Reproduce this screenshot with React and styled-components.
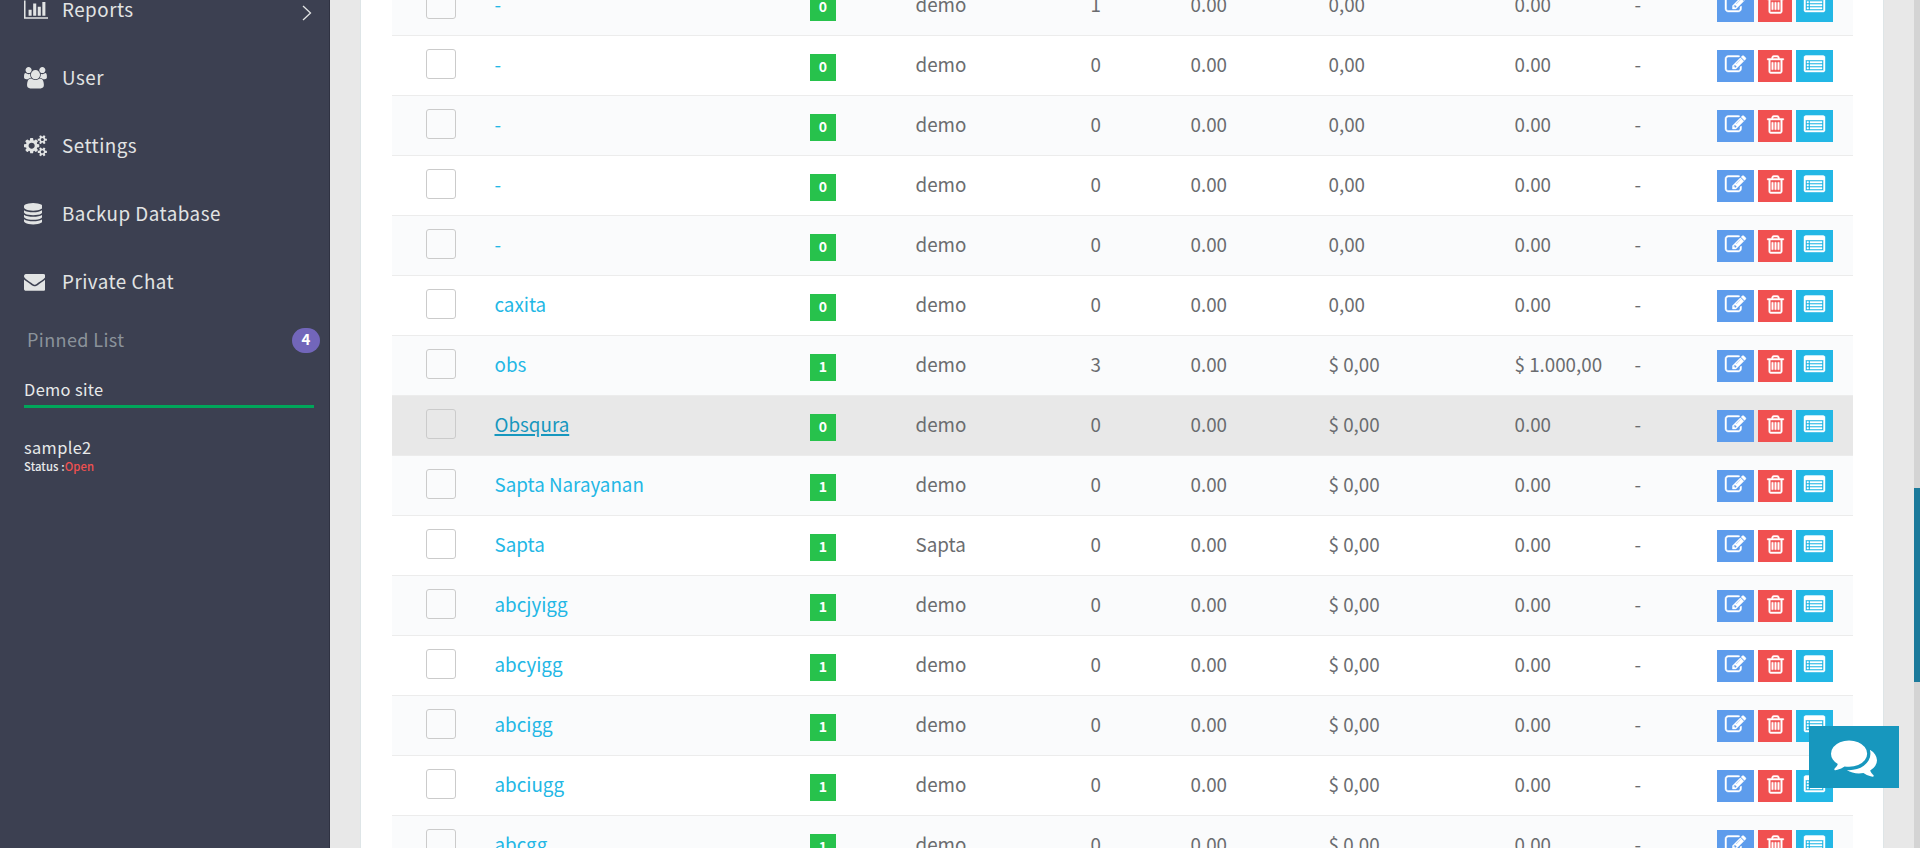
import React from "react";
import styled, { createGlobalStyle } from "styled-components";

const Global = createGlobalStyle`
  * { box-sizing: border-box; }
  html, body { margin: 0; padding: 0; }
  body {
    height: 848px;
    overflow: hidden;
    background: #e8e8e8;
    font-family: "Noto Sans CJK SC", "Open Sans", sans-serif;
    font-size: 18.8px;
    color: #6a6c6f;
  }
`;

const Page = styled.div`
  display: flex;
  height: 848px;
  overflow: hidden;
`;

const Sidebar = styled.aside`
  width: 330px;
  flex: none;
  background: #3c4051;
  border-right: 1px solid #2f3242;
  color: #e2e4e4;
  overflow: hidden;
`;

const Menu = styled.nav`
  display: flex;
  flex-direction: column;
  margin-top: -24px;
`;

const MenuItem = styled.a`
  display: grid;
  grid-template-columns: 38px 1fr auto;
  align-items: center;
  height: 68px;
  padding: 0 17px 0 24px;
  font-size: 18.8px;
  letter-spacing: 0.5px;
  line-height: 28px;
`;

const MenuLabel = styled.span`
  padding-bottom: 2px;
`;

const MenuIcon = styled.svg`
  display: block;
  height: 21.4px;
  width: ${(p) => p.$w}px;
  fill: currentColor;
`;

const Chevron = styled.svg`
  display: block;
  width: 10px;
  height: 16px;
  margin-top: 5px;
  fill: none;
  stroke: #e2e4e4;
  stroke-width: 1.3;
`;

const PinnedHeader = styled.div`
  display: flex;
  align-items: flex-start;
  justify-content: space-between;
  height: 26px;
  margin: 12px 9px 0 27px;
  color: #8b939b;
  font-size: 18px;
  line-height: 22px;
  letter-spacing: 0.4px;
`;

const Count = styled.span`
  width: 28px;
  height: 25px;
  border-radius: 13px;
  background: #7266ba;
  color: #fff;
  font-size: 15px;
  font-weight: 700;
  letter-spacing: 0;
  line-height: 22px;
  text-align: center;
`;

const Pinned = styled.div`
  margin: ${(p) => p.$top}px 15px 0 24px;
  color: #e8eaea;
  font-size: 16.4px;
  line-height: 24px;
  letter-spacing: 0.35px;
`;

const Progress = styled.div`
  height: 3px;
  margin-top: 4px;
  background: #00a65a;
`;

const Status = styled.div`
  font-size: 11.3px;
  font-weight: 500;
  line-height: 14px;
  letter-spacing: 0.1px;
  color: #e8eaea;
`;

const Open = styled.span`
  color: #f05050;
`;

const Main = styled.main`
  flex: 1;
  display: flex;
  padding-left: 30px;
  overflow: hidden;
`;

const Panel = styled.section`
  width: 1524px;
  flex: none;
  padding-left: 31px;
  background: #fff;
  border-left: 1px solid #dee5e7;
  border-right: 1px solid #dee5e7;
`;

const Table = styled.div`
  width: 1461px;
  margin-top: -25px;
`;

const Row = styled.div`
  display: grid;
  grid-template-columns: 34px 68px 316px 105px 175px 100px 138px 186px 120px 83px 1fr;
  align-items: start;
  height: 60px;
  border-top: 1px solid #ececec;
  background: ${(p) => (p.$hover ? "#e8e8e8" : p.$odd ? "#fafbfc" : "#fff")};
`;

const Check = styled.span`
  grid-column: 2;
  width: 30px;
  height: 30px;
  margin-top: 13px;
  border: 1px solid #cbcbcb;
  border-radius: 3px;
`;

const Cell = styled.span`
  padding-top: 14px;
  padding-left: 0.5px;
  line-height: 28px;
  white-space: nowrap;
`;

const Name = styled(Cell)`
  color: ${(p) => (p.$hover ? "#1797be" : "#23b7e5")};
  text-decoration: ${(p) => (p.$hover ? "underline" : "none")};
  text-decoration-thickness: 2px;
  text-underline-offset: 2px;
`;

const Badge = styled.span`
  width: 26px;
  height: 27px;
  margin-top: 18px;
  background: #27c24c;
  color: #fff;
  font-size: 14px;
  font-weight: 700;
  line-height: 25px;
  text-align: center;
`;

const Actions = styled.span`
  display: flex;
  gap: 4px;
  padding-top: 14px;
`;

const Button = styled.button`
  display: flex;
  justify-content: center;
  width: ${(p) => p.$w}px;
  height: 32px;
  padding: 4px 0 0;
  border: 0;
  background: ${(p) => p.$bg};
`;

const ButtonIcon = styled.svg`
  width: 21px;
  height: 21px;
  flex: none;
  fill: #fff;
  stroke: #fff;
  stroke-width: 36;
`;

const Scrollbar = styled.div`
  width: 6px;
  height: 848px;
  margin-left: auto;
  padding-top: 488px;
  background: #d4d4d4;
`;

const Thumb = styled.div`
  height: 194px;
  background: #1b7a9b;
`;

const Chat = styled.button`
  position: fixed;
  left: 1809px;
  top: 726px;
  display: flex;
  justify-content: center;
  width: 90px;
  height: 62px;
  padding: 8px 0 0 0;
  border: 0;
  background: #1797be;
`;

const ChatIcon = styled.svg`
  width: 46px;
  height: 46px;
  flex: none;
  fill: #fff;
`;

const gear = "q0 16-149 31-12 27-30 52 51 113 51 138 0 4-4 7-122 71-124 71-8 0-46-47t-52-68q-20 2-30 2t-30-2q-14 21-52 68t-46 47q-2 0-124-71-4-3-4-7 0-25 51-138-18-25-30-52-149-15-149-31v-140q0-16 149-31 13-29 30-52-51-113-51-138 0-4 4-7 4-2 35-20t59-34 30-16q8 0 46 46.5t52 67.5q20-2 30-2t30 2q51-71 92-112l6-2q4 0 124 70 4 3 4 7 0 25-51 138 17 23 30 52 149 15 149 31z";
const gearHole = "m-256 70q0-52-38-90t-90-38-90 38-38 90q0 53 37.5 90.5t90.5 37.5 90.5-37.5 37.5-90.5z";
const disk = "q237 0 443-43t325-127v170q0 69-103 128t-280 93.5-385 34.5-385-34.5-280-93.5-103-128v-170q119 84 325 127t443 43z";
const slot = "v576q0 14-9 23t-23 9h-64q-14 0-23-9t-9-23v-576q0-14 9-23t23-9h64q14 0 23 9t9 23z";

const menu = [
  { label: "Reports", units: 2048, d: "M640 896v512h-256v-512h256zm384-512v1024h-256v-1024h256zm1024 1152v128h-2048v-1536h128v1408h1920zm-640-896v768h-256v-768h256zm384-384v1152h-256v-1152h256z" },
  { label: "User", units: 1920, d: "M593 896q-162 5-265 128h-134q-82 0-138-40.5t-56-118.5q0-353 124-353 6 0 43.5 21t97.5 42.5 119 21.5q67 0 133-23-5 37-5 66 0 139 81 256zm1071 637q0 120-73 189.5t-194 69.5h-874q-121 0-194-69.5t-73-189.5q0-53 3.5-103.5t14-109 26.5-108.5 43-97.5 62-81 85.5-53.5 111.5-20q10 0 43 21.5t73 48 107 48 135 21.5 135-21.5 107-48 73-48 43-21.5q61 0 111.5 20t85.5 53.5 62 81 43 97.5 26.5 108.5 14 109 3.5 103.5zm-1024-1277q0 106-75 181t-181 75-181-75-75-181 75-181 181-75 181 75 75 181zm704 384q0 159-112.5 271.5t-271.5 112.5-271.5-112.5-112.5-271.5 112.5-271.5 271.5-112.5 271.5 112.5 112.5 271.5zm576 225q0 78-56 118.5t-138 40.5h-134q-103-123-265-128 81-117 81-256 0-29-5-66 66 23 133 23 59 0 119-21.5t97.5-42.5 43.5-21q124 0 124 353zm-128-609q0 106-75 181t-181 75-181-75-75-181 75-181 181-75 181 75 75 181z" },
  { label: "Settings", units: 1920, d: "M896 896q0-106-75-181t-181-75-181 75-75 181 75 181 181 75 181-75 75-181zm384-91v185q0 10-7 19.5t-16 10.5l-155 24q-11 35-32 76 34 48 90 115 7 11 7 20 0 12-7 19-23 30-82.5 89.5t-78.5 59.5q-11 0-21-7l-115-90q-37 19-77 31-11 108-23 155-7 24-30 24h-186q-11 0-20-7.5t-10-17.5l-23-153q-34-10-75-31l-118 89q-7 7-20 7-11 0-21-8-144-133-144-160 0-9 7-19 10-14 41-53t47-61q-23-44-35-82l-152-24q-10-1-17-9.5t-7-19.5v-185q0-10 7-19.5t16-10.5l155-24q11-35 32-76-34-48-90-115-7-11-7-20 0-12 7-20 22-30 82-89t79-59q11 0 21 7l115 90q34-18 77-32 11-108 23-154 7-24 30-24h186q11 0 20 7.5t10 17.5l23 153q34 10 75 31l118-89q8-7 20-7 11 0 21 8 144 133 144 160 0 8-7 19-12 16-42 54t-45 60q23 48 34 82l152 23q10 2 17 10.5t7 19.5zM1920 1338v140" + gear + gearHole + "M1920 314v140" + gear + gearHole },
  { label: "Backup Database", units: 1536, d: "M768 768" + disk + "M768 1536" + disk + "M768 1152" + disk + "M768 0q208 0 385 34.5t280 93.5 103 128v128q0 69-103 128t-280 93.5-385 34.5-385-34.5-280-93.5-103-128v-128q0-69 103-128t280-93.5 385-34.5z" },
  { label: "Private Chat", units: 1792, d: "M1792 710v794q0 66-47 113t-113 47h-1472q-66 0-113-47t-47-113v-794q44 49 101 87 362 246 497 345 57 42 92.5 65.5t94.5 48 110 24.5h2q51 0 110-24.5t94.5-48 92.5-65.5q170-123 498-345 57-39 100-87zm0-294q0 79-49 151t-122 123q-376 261-468 325-10 7-42.5 31t-54 38.5-52 32.5-57.5 27-50 9h-2q-23 0-50-9t-57.5-27-52-32.5-54-38.5-42.5-31q-91-64-262-182.5t-205-142.5q-62-42-117-115.5t-55-136.5q0-78 41.5-130t118.5-52h1472q65 0 112.5 47t47.5 113z" },
];

const editPath = "M888 1184l116-116-152-152-116 116v56h96v96h56zm440-720q-16-16-33 1l-350 350q-17 17-1 33t33-1l350-350q17-17 1-33zm80 594v190q0 119-84.5 203.5t-203.5 84.5h-832q-119 0-203.5-84.5t-84.5-203.5v-832q0-119 84.5-203.5t203.5-84.5h832q63 0 117 25 15 7 18 23 3 17-9 29l-49 49q-14 14-32 8-23-6-45-6h-832q-66 0-113 47t-47 113v832q0 66 47 113t113 47h832q66 0 113-47t47-113v-126q0-13 9-22l64-64q15-15 35-7t20 29zm-96-738l288 288-672 672h-288v-288zm444 132l-92 92-288-288 92-92q28-28 68-28t68 28l152 152q28 28 28 68t-28 68z";
const trashPath = "M704 736" + slot + "M960 736" + slot + "M1216 736" + slot + "M1344 1460v-948h-896v948q0 22 7 40.5t14.5 27 10.5 8.5h832q3 0 10.5-8.5t14.5-27 7-40.5zm-672-1076h448l-48-117q-7-9-17-11h-317q-10 2-17 11zm928 32v64q0 14-9 23t-23 9h-96v948q0 83-47 143.5t-113 60.5h-832q-66 0-113-58.5t-47-141.5v-952h-96q-14 0-23-9t-9-23v-64q0-14 9-23t23-9h309l70-167q15-37 54-63t79-26h320q40 0 79 26t54 63l70 167h309q14 0 23 9t9 23z";
const listPath = "M1664 1376v-832q0-13-9.5-22.5t-22.5-9.5h-1472q-13 0-22.5 9.5t-9.5 22.5v832q0 13 9.5 22.5t22.5 9.5h1472q13 0 22.5-9.5t9.5-22.5zM1792 288v1088q0 66-47 113t-113 47h-1472q-66 0-113-47t-47-113v-1088q0-66 47-113t113-47h1472q66 0 113 47t47 113z" +
  [640, 896, 1152].map((y) => `M256 ${y}h128v128h-128zM512 ${y}h1024v128h-1024z`).join("");
const chatPath = "M1408 768q0 139-94 257t-256.5 186.5-353.5 68.5q-86 0-176-16-124 88-278 128-36 9-86 16h-3q-11 0-20.5-8t-11.5-21q-1-3-1-6.5t.5-6.5 2-6l2.5-5 3.5-5.5 4-5 4.5-5 4-4.5q5-6 23-25t26-29.5 22.5-29 25-38.5 20.5-44q-124-72-195-177t-71-224q0-139 94-257t256.5-186.5 353.5-68.5 353.5 68.5 256.5 186.5 94 257zm384 256q0 120-71 224.5t-195 176.5q10 24 20.5 44t25 38.5 22.5 29 26 29.5 23 25q1 1 4 4.5t4.5 5 4 5 3.5 5.5l2.5 5 2 6 .5 6.5-1 6.5q-3 14-13 22t-22 7q-50-7-86-16-154-40-278-128-90 16-176 16-271 0-472-132 58 4 88 4 161 0 309-45t264-129q125-92 192-212t67-254q0-77-23-152 129 71 204 178t75 230z";

const actions = [
  { title: "Edit", w: 37, bg: "#5d9cec", d: editPath },
  { title: "Delete", w: 34, bg: "#f05050", d: trashPath },
  { title: "Details", w: 37, bg: "#23b7e5", d: listPath },
];

const rows = [
  ["-", 0, "demo", 1, "0,00", "0.00"],
  ["-", 0, "demo", 0, "0,00", "0.00"],
  ["-", 0, "demo", 0, "0,00", "0.00"],
  ["-", 0, "demo", 0, "0,00", "0.00"],
  ["-", 0, "demo", 0, "0,00", "0.00"],
  ["caxita", 0, "demo", 0, "0,00", "0.00"],
  ["obs", 1, "demo", 3, "$ 0,00", "$ 1.000,00"],
  ["Obsqura", 0, "demo", 0, "$ 0,00", "0.00"],
  ["Sapta Narayanan", 1, "demo", 0, "$ 0,00", "0.00"],
  ["Sapta", 1, "Sapta", 0, "$ 0,00", "0.00"],
  ["abcjyigg", 1, "demo", 0, "$ 0,00", "0.00"],
  ["abcyigg", 1, "demo", 0, "$ 0,00", "0.00"],
  ["abcigg", 1, "demo", 0, "$ 0,00", "0.00"],
  ["abciugg", 1, "demo", 0, "$ 0,00", "0.00"],
  ["abcgg", 1, "demo", 0, "$ 0,00", "0.00"],
];

export default function App() {
  return (
    <Page>
      <Global />
      <Sidebar>
        <Menu>
          {menu.map((m) => (
            <MenuItem key={m.label}>
              <MenuIcon viewBox={`0 0 ${m.units} 1792`} $w={(m.units / 1792) * 21.4}>
                <path d={m.d} fillRule="evenodd" />
              </MenuIcon>
              <MenuLabel>{m.label}</MenuLabel>
              {m.label === "Reports" && (
                <Chevron viewBox="0 0 10 16">
                  <path d="M1 1l7.5 7L1 15" />
                </Chevron>
              )}
            </MenuItem>
          ))}
        </Menu>
        <PinnedHeader>
          Pinned List
          <Count>4</Count>
        </PinnedHeader>
        <Pinned $top={23}>
          Demo site
          <Progress />
        </Pinned>
        <Pinned $top={27}>
          sample2
          <Status>
            Status :<Open>Open</Open>
          </Status>
        </Pinned>
      </Sidebar>
      <Main>
        <Panel>
          <Table>
            {rows.map(([name, count, user, orders, paid, due], i) => {
              const hover = name === "Obsqura";
              return (
                <Row key={i} $odd={i % 2 === 0} $hover={hover}>
                  <Check />
                  <Name $hover={hover}>{name}</Name>
                  <Badge>{count}</Badge>
                  <Cell>{user}</Cell>
                  <Cell>{orders}</Cell>
                  <Cell>0.00</Cell>
                  <Cell>{paid}</Cell>
                  <Cell>{due}</Cell>
                  <Cell>-</Cell>
                  <Actions>
                    {actions.map((a) => (
                      <Button key={a.title} $w={a.w} $bg={a.bg}>
                        <ButtonIcon viewBox="0 0 1792 1792" overflow="visible">
                          <path d={a.d} />
                        </ButtonIcon>
                      </Button>
                    ))}
                  </Actions>
                </Row>
              );
            })}
          </Table>
        </Panel>
        <Scrollbar>
          <Thumb />
        </Scrollbar>
      </Main>
      <Chat>
        <ChatIcon viewBox="0 0 1792 1792">
          <path d={chatPath} />
        </ChatIcon>
      </Chat>
    </Page>
  );
}
